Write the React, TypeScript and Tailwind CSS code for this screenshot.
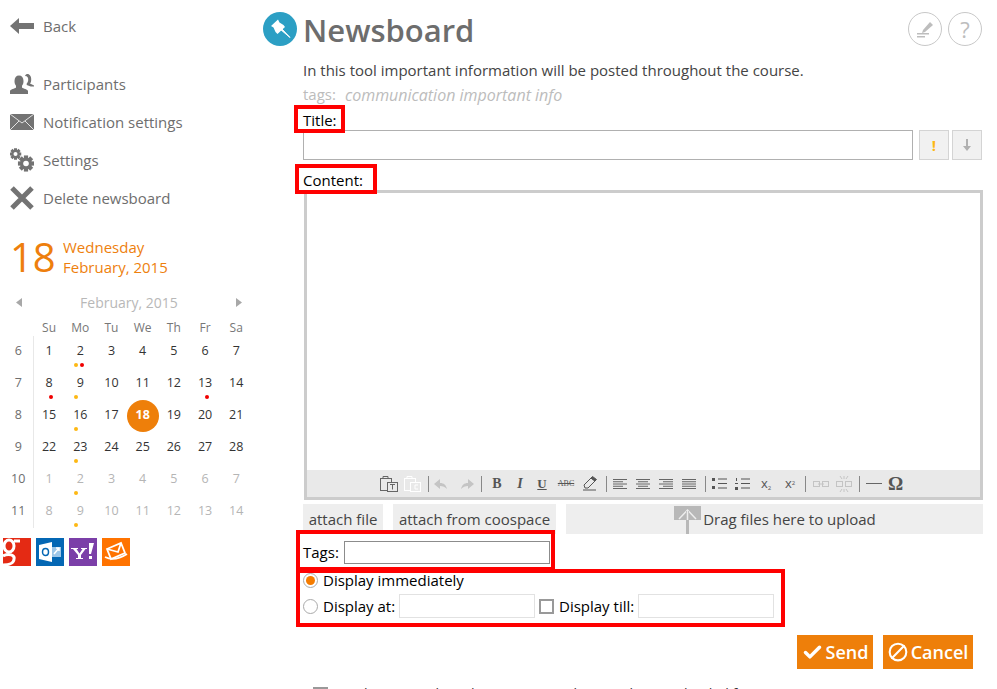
import React from "react";
import { Check, Ban } from "lucide-react";

const Y = "#fdb813";
const R = "#f00000";

function Back() {
  return <svg width="24" height="16" viewBox="0 0 24 16" fill="#737373"><path d="M0 8 9 0v5h15v6H9v5z" /></svg>;
}
function People() {
  return (
    <svg width="24" height="20" viewBox="0 0 24 20" fill="#737373">
      <path d="M15 2c2.500 0 3.500 2 3.200 4.300-.2 1.500-.9 2.500-1.500 3.300v1.500l4 1.500H24v-1l-4-2c1-1 1.200-2.200 1.200-4.600C21.200 1.500 19 0 17.500 0 16.500 0 15.600.5 15 2z" />
      <path d="M0 20v-3c0-1.500 5-2.500 6-3.500v-1.800C5 10.500 4.500 9 4.500 7c0-3.500 1.700-5.500 4.500-5.500s4.500 2 4.500 5.500c0 2-.5 3.500-1.500 4.700v1.800c1 1 6 2 6 3.500v3z" />
    </svg>
  );
}
function Mail() {
  return (
    <svg width="24" height="16" viewBox="0 0 24 16">
      <rect width="24" height="16" fill="#737373" />
      <path d="M0 0 12 9 24 0M0 16 9 7M24 16 15 7" stroke="#fff" strokeWidth="0.8" fill="none" />
    </svg>
  );
}
function Gear({ cx, cy, r }: { cx: number; cy: number; r: number }) {
  const teeth = [0, 45, 90, 135];
  return (
    <g>
      {teeth.map((a) => (
        <rect key={a} x={cx - r * 0.3} y={cy - r * 1.15} width={r * 0.6} height={r * 2.3} fill="#737373" transform={`rotate(${a} ${cx} ${cy})`} />
      ))}
      <circle cx={cx} cy={cy} r={r * 0.85} fill="#737373" />
      <circle cx={cx} cy={cy} r={r * 0.4} fill="#fff" />
    </g>
  );
}
function Gears() {
  return (
    <svg width="24" height="24" viewBox="0 0 24 24">
      <Gear cx={5.500} cy={6} r={5} />
      <Gear cx={16} cy={15.500} r={7} />
    </svg>
  );
}
function Cross() {
  return (
    <svg width="24" height="24" viewBox="0 0 24 24">
      <path d="M2 2 22 22M22 2 2 22" stroke="#737373" strokeWidth="5" />
    </svg>
  );
}

function MenuRow({ icon, label, mt }: { icon: React.ReactNode; label: string; mt?: string }) {
  return (
    <div className={`flex h-[38px] items-center ${mt ?? ""}`}>
      <div className="flex w-[33px] shrink-0 items-center">{icon}</div>
      <span className="text-[15px] text-[#6e6e6e]">{label}</span>
    </div>
  );
}

type Cell = { d: number; dim?: boolean; dots?: string[]; today?: boolean };
const weeks: { n: number; days: Cell[] }[] = [
  { n: 6, days: [{ d: 1 }, { d: 2, dots: [Y, R] }, { d: 3 }, { d: 4 }, { d: 5 }, { d: 6 }, { d: 7 }] },
  { n: 7, days: [{ d: 8, dots: ["transparent", R] }, { d: 9, dots: [Y, "transparent"] }, { d: 10 }, { d: 11 }, { d: 12 }, { d: 13, dots: ["transparent", R] }, { d: 14 }] },
  { n: 8, days: [{ d: 15 }, { d: 16, dots: [Y, "transparent"] }, { d: 17 }, { d: 18, today: true }, { d: 19 }, { d: 20 }, { d: 21 }] },
  { n: 9, days: [{ d: 22 }, { d: 23, dots: [Y, "transparent"] }, { d: 24 }, { d: 25 }, { d: 26 }, { d: 27 }, { d: 28 }] },
  { n: 10, days: [{ d: 1, dim: true }, { d: 2, dim: true, dots: [Y, "transparent"] }, { d: 3, dim: true }, { d: 4, dim: true }, { d: 5, dim: true }, { d: 6, dim: true }, { d: 7, dim: true }] },
  { n: 11, days: [{ d: 8, dim: true }, { d: 9, dim: true, dots: [Y, "transparent"] }, { d: 10, dim: true }, { d: 11, dim: true }, { d: 12, dim: true }, { d: 13, dim: true }, { d: 14, dim: true }] },
];

function Calendar() {
  return (
    <div className="w-[252px] pl-[3px]">
      <div className="flex h-[25px] items-center justify-between pl-[13px] pr-[10px] text-[14px] text-[#b8b8b8]">
        <svg width="6" height="9" viewBox="0 0 6 9" fill="#a8a8a8"><path d="M6 0v9L0 4.500z" /></svg>
        <span>February, 2015</span>
        <svg width="6" height="9" viewBox="0 0 6 9" fill="#a8a8a8"><path d="M0 0v9l6-4.500z" /></svg>
      </div>
      <div className="flex h-[21px] items-center pt-[4px] text-[12px] text-[#777]">
        <div className="w-[30.500px]" />
        {["Su", "Mo", "Tu", "We", "Th", "Fr", "Sa"].map((d) => (
          <div key={d} className="w-[31.200px] text-center">{d}</div>
        ))}
      </div>
      {weeks.map((w) => (
        <div key={w.n} className="flex h-[32px]">
          <div className="flex w-[30.500px] items-start justify-center border-r border-[#e8e8e8] pt-[6px] pl-[1px] text-[12.500px] leading-[18px] text-[#6e6e6e]">{w.n}</div>
          {w.days.map((c, i) => (
            <div key={i} className="relative w-[31.200px] pt-[6px] text-center text-[12.500px] leading-[18px]">
              {c.today && <div className="absolute left-[0px] top-[0px] h-[32px] w-[32px] rounded-full bg-[#ee7f0a]" />}
              <span className={`relative ${c.today ? "font-bold text-white" : c.dim ? "text-[#b5b5b5]" : "text-[#333]"}`}>{c.d}</span>
              {c.dots && (
                <div className="absolute left-[0px] top-[27px] flex w-full justify-center gap-[2px] pr-[3px]">
                  {c.dots.map((col, j) => (
                    <span key={j} className="h-[4px] w-[4px] rounded-full" style={{ backgroundColor: col }} />
                  ))}
                </div>
              )}
            </div>
          ))}
        </div>
      ))}
    </div>
  );
}

function Socials() {
  return (
    <div className="mt-[10px] flex gap-[5px] pl-[3px]">
      <div className="h-[28px] w-[28px] overflow-hidden bg-[#e42a14]">
        <svg width="28" height="28" viewBox="0 0 28 28" fill="none" stroke="#fff">
          <ellipse cx="6" cy="8" rx="5" ry="6" strokeWidth="3" />
          <path d="M11 3h6M0 18c6-3 12-1 11 3 0 4-5 6-11 6" strokeWidth="3" />
        </svg>
      </div>
      <div className="flex h-[28px] w-[28px] items-center justify-center bg-[#0467b4]">
        <svg width="22" height="20" viewBox="0 0 22 20">
          <rect x="9" y="5" width="13" height="10" fill="#9cc6e8" />
          <path d="M0 3 13 0v20L0 17z" fill="#fff" />
          <ellipse cx="6.500" cy="10" rx="3" ry="3.500" fill="none" stroke="#0467b4" strokeWidth="1.500" />
          <path d="M15 12l5-6M17 6h3v3" stroke="#fff" strokeWidth="1.500" fill="none" />
        </svg>
      </div>
      <div className="flex h-[28px] w-[28px] items-center justify-center bg-[#7b3fa8]">
        <svg width="24" height="20" viewBox="0 0 24 20" fill="#fff">
          <path d="M0 6h7v1H5.500l3 4.500L11.500 7H10V6h6v1h-1.500L10 13v3h2v1H5v-1h2v-3L2 7H0z" />
          <path d="M18 1h5l-3 11h-2zM18 14h3v3h-3z" />
        </svg>
      </div>
      <div className="flex h-[28px] w-[28px] items-center justify-center bg-[#ff7300]">
        <svg width="24" height="22" viewBox="0 0 24 22" fill="none" stroke="#fff" strokeWidth="1.800">
          <path d="M3 8 17 2l4 10L7 18zM3 8l11 3 3-9" />
          <path d="M1 16c6 3 14 2 22-3" />
        </svg>
      </div>
    </div>
  );
}

function Sep({ ml, mr }: { ml: string; mr: string }) {
  return <span className={`h-[16px] w-px shrink-0 bg-[#888] ${ml} ${mr}`} />;
}

function Lines({ kind, ml }: { kind: "l" | "c" | "r" | "j"; ml?: string }) {
  const rows = [0, 1, 2, 3, 4];
  return (
    <svg className={`shrink-0 ${ml ?? ""}`} width="14" height="12" viewBox="0 0 14 12" stroke="#666" strokeWidth="1">
      {rows.map((i) => {
        const long = i % 2 === 0 || kind === "j";
        const x1 = long ? 0 : kind === "l" ? 0 : kind === "c" ? 2 : 4;
        const x2 = long ? 14 : kind === "l" ? 10 : kind === "c" ? 12 : 14;
        return <line key={i} x1={x1} x2={x2} y1={1.500 + i * 2.250} y2={1.500 + i * 2.250} />;
      })}
    </svg>
  );
}

function Toolbar() {
  const tx = "shrink-0 text-[#555] leading-none font-['Liberation_Serif',serif]";
  return (
    <div className="flex h-[27px] items-center bg-[#e9e9e9] pl-[73px]">
      <svg className="shrink-0" width="18" height="16" viewBox="0 0 18 16" fill="none" stroke="#666"><rect x="0.500" y="2.500" width="11" height="12" /><rect x="7.500" y="6.500" width="10" height="9" fill="#e9e9e9" /><path d="M3 2.500V.5h5v2M10 8.500h5M12.500 8.500v5" /></svg>
      <svg className="ml-[6px] shrink-0" width="17" height="16" viewBox="0 0 17 16" fill="none" stroke="#fff"><rect x="0.500" y="2.500" width="11" height="12" /><rect x="6.500" y="6.500" width="10" height="9" fill="#e9e9e9" /><path d="M3 2.500V.5h5v2M14 9h-3v4h3" /></svg>
      <Sep ml="ml-[7px]" mr="mr-[5px]" />
      <svg className="shrink-0" width="14" height="12" viewBox="0 0 14 12" fill="#c4c4c4"><path d="M6 1 0 6l6 5V8c3 0 5 1 7 3-1-4-3-6-7-6z" /></svg>
      <svg className="ml-[12px] shrink-0" width="14" height="12" viewBox="0 0 14 12" fill="#c4c4c4"><path d="M8 1l6 5-6 5V8c-3 0-5 1-7 3 1-4 3-6 7-6z" /></svg>
      <Sep ml="ml-[7px]" mr="mr-[8px]" />
      <span className={`${tx} w-[14px] text-center text-[14px] font-bold`}>B</span>
      <span className={`${tx} ml-[10px] w-[12px] text-center text-[14px] font-bold italic`}>I</span>
      <span className={`${tx} ml-[10px] w-[12px] text-center text-[13px] font-bold underline`}>U</span>
      <span className={`${tx} ml-[9px] w-[18px] text-center text-[8px] line-through`}>ABC</span>
      <svg className="ml-[7px] shrink-0" width="16" height="15" viewBox="0 0 16 15" fill="none" stroke="#555"><path d="M2 9 9 2l4 3-7 7H3z" /><path d="M9 2l4 3 1.500-1.500-4-3z" fill="#555" /><path d="M1 14h13" /></svg>
      <Sep ml="ml-[8px]" mr="mr-[6px]" />
      <Lines kind="l" />
      <Lines kind="c" ml="ml-[9px]" />
      <Lines kind="r" ml="ml-[9px]" />
      <Lines kind="j" ml="ml-[9px]" />
      <Sep ml="ml-[9px]" mr="mr-[6px]" />
      <svg className="shrink-0" width="15" height="14" viewBox="0 0 15 14" fill="#555"><rect x="0" y="1" width="3" height="3" /><rect x="0" y="9" width="3" height="3" /><path d="M6 1.500h9v1H6zM6 6h9v1H6zM6 10.500h9v1H6z" /></svg>
      <svg className="ml-[8px] shrink-0" width="15" height="14" viewBox="0 0 15 14" fill="#555"><path d="M1 1h1v3H1zM0 6h3v1H0zM0 10h3v3H0zM6 1.500h9v1H6zM6 6h9v1H6zM6 10.500h9v1H6z" /></svg>
      <span className="ml-[9px] w-[14px] shrink-0 text-center text-[13px] leading-none text-[#555]">x<sub className="text-[6px]">2</sub></span>
      <span className="ml-[10px] w-[14px] shrink-0 text-center text-[13px] leading-none text-[#555]">x<sup className="text-[6px]">2</sup></span>
      <Sep ml="ml-[8px]" mr="mr-[7px]" />
      <svg className="shrink-0" width="16" height="8" viewBox="0 0 16 8" fill="none" stroke="#c4c4c4"><rect x="0.500" y="1.500" width="6" height="5" /><rect x="9.500" y="1.500" width="6" height="5" /><path d="M5 4h6" /></svg>
      <svg className="ml-[7px] shrink-0" width="16" height="16" viewBox="0 0 16 16" fill="none" stroke="#c4c4c4"><rect x="0.500" y="5.500" width="6" height="5" /><rect x="9.500" y="5.500" width="6" height="5" /><path d="M8 0v3M4 0l2 3M12 0l-2 3M8 13v3M4 16l2-3M12 16l-2-3" /></svg>
      <Sep ml="ml-[7px]" mr="mr-[6px]" />
      <span className="h-px w-[16px] shrink-0 bg-[#666]" />
      <span className={`${tx} ml-[6px] text-[19px] font-bold`}>Ω</span>
    </div>
  );
}

export default function App() {
  return (
    <div className="relative flex h-[689px] w-[997px] overflow-hidden bg-white font-['Open_Sans',sans-serif] text-[15px]">
      <aside className="w-[263px] shrink-0">
        <div className="pl-[10px] pt-[7px]">
          <MenuRow icon={<Back />} label="Back" />
          <MenuRow icon={<People />} label="Participants" mt="mt-[20px]" />
          <MenuRow icon={<Mail />} label="Notification settings" />
          <MenuRow icon={<Gears />} label="Settings" />
          <MenuRow icon={<Cross />} label="Delete newsboard" />
        </div>
        <div className="mt-[20px] flex h-[40px] items-center pl-[10px] text-[#ee7f0d]">
          <span className="w-[53px] text-[40px] leading-none">18</span>
          <div className="text-[15px] leading-[20px]">
            <div>Wednesday</div>
            <div>February, 2015</div>
          </div>
        </div>
        <div className="mt-[13px]">
          <Calendar />
        </div>
        <Socials />
      </aside>

      <main className="w-[720px] pl-[40px]">
        <div className="relative flex h-[60px] items-center">
          <div className="absolute left-[-40px] top-[12px] h-[34px] w-[34px] rounded-full bg-[#2c9fc4]">
            <svg width="34" height="34" viewBox="0 0 34 34" fill="#fff">
              <path d="M8 14 15 7.500 16.500 10.500 20.500 13 22 15 14.500 22 12.500 20 10.500 15.500z" />
              <path d="M17 17 27 25.500 18 16z" stroke="#fff" strokeWidth="1" />
            </svg>
          </div>
          <h1 className="text-[31px] font-semibold leading-none text-[#6d6d6d]">Newsboard</h1>
          <div className="absolute left-[605px] top-[12px] flex gap-[6px]">
            <div className="flex h-[34px] w-[34px] items-center justify-center rounded-full border border-[#c8c8c8]">
              <svg width="20" height="20" viewBox="0 0 20 20" fill="#bdbdbd">
                <path d="M8 11 15 3l3 3-8 7-3 1z" />
                <path d="M2 14h12v1.500H2zM2 17h8v1.500H2z" />
              </svg>
            </div>
            <div className="flex h-[34px] w-[34px] items-center justify-center rounded-full border border-[#c8c8c8] text-[22px] text-[#bdbdbd]">?</div>
          </div>
        </div>
        <p className="h-[22px] leading-[20px] text-[#444]">In this tool important information will be posted throughout the course.</p>
        <p className="flex h-[25px] items-center gap-[9px] text-[#bcbcbc]">
          <span>tags:</span>
          <span className="text-[16px] italic">communication important info</span>
        </p>
        <label className="block h-[23px] pt-[3px] leading-[20px] text-black">Title:</label>
        <div className="flex h-[30px] items-stretch">
          <input className="w-[610px] border border-[#b0b0b0]" />
          <button className="ml-[6px] flex w-[30px] items-center justify-center border border-[#d4d4d4] bg-[#f1f1f1] text-[15px] font-bold text-[#fdb813]">!</button>
          <button className="ml-[3px] flex w-[30px] items-center justify-center border border-[#d4d4d4] bg-[#f1f1f1]">
            <svg width="10" height="12" viewBox="0 0 10 12" fill="#b0b0b0"><path d="M4 0h2v7h3l-4 5-4-5h3z" /></svg>
          </button>
        </div>
        <label className="block h-[30px] pt-[10px] leading-[20px] text-black">Content:</label>
        <div className="ml-[1px] flex h-[310px] w-[679px] flex-col justify-end border-[3px] border-[#cccccc]">
          <Toolbar />
        </div>
        <div className="mt-[4px] flex h-[30px] w-[680px] text-[#444]">
          <button className="w-[80px] bg-[#eeeeee]">attach file</button>
          <button className="ml-[10px] w-[163px] bg-[#eeeeee]">attach from coospace</button>
          <div className="ml-[10px] flex w-[417px] items-center justify-center bg-[#eeeeee]">
            <svg className="shrink-0 self-end" width="30" height="28" viewBox="0 0 30 28">
              <rect x="1" y="0" width="27" height="14" fill="#b8b8b8" />
              <path d="M6 13 14.500 4 23 13" fill="none" stroke="#eee" strokeWidth="1.500" />
              <path d="M14.500 5v23" stroke="#b8b8b8" strokeWidth="3" />
              <path d="M14.500 5v9" stroke="#eee" strokeWidth="1.500" />
            </svg>
            <span>Drag files here to upload</span>
          </div>
        </div>
        <div className="mt-[7px] flex h-[23px] items-center text-black">
          <span className="w-[41px]">Tags:</span>
          <input className="h-[23px] w-[206px] border border-[#8c8c8c]" />
        </div>
        <div className="mt-[4px] flex h-[24px] items-center text-black">
          <span className="flex h-[15px] w-[15px] items-center justify-center rounded-full border border-[#aaa]">
            <span className="h-[9px] w-[9px] rounded-full bg-[#f57c00]" />
          </span>
          <span className="ml-[5px]">Display immediately</span>
        </div>
        <div className="mt-[2px] flex h-[24px] items-center text-black">
          <span className="h-[15px] w-[15px] rounded-full border border-[#aaa]" />
          <span className="ml-[5px] w-[76px]">Display at:</span>
          <input className="h-[24px] w-[136px] border border-[#e2e2e2]" />
          <span className="ml-[4px] h-[15px] w-[15px] border-2 border-[#999]" />
          <span className="ml-[5px] w-[79px]">Display till:</span>
          <input className="h-[24px] w-[136px] border border-[#e2e2e2]" />
        </div>
        <div className="mt-[17px] flex h-[34px] w-[670px] justify-end gap-[10px] text-[18px] font-semibold text-white">
          <button className="flex w-[76px] items-center justify-center gap-[3px] bg-[#ee7f0a]">
            <Check size={21} strokeWidth={4} />Send
          </button>
          <button className="flex w-[90px] items-center justify-center gap-[3px] bg-[#ee7f0a]">
            <Ban size={20} strokeWidth={2.500} className="-scale-x-100" />Cancel
          </button>
        </div>
        <div className="mt-[18px] flex h-[16px] items-start pl-[10px] text-[14px] leading-none text-[#333]">
          <span className="h-[14px] w-[15px] bg-[#999]" />
          <span className="ml-[7px]">Display in newsboard on coospace's home, when it is loaded for</span>
        </div>
      </main>

      <div className="pointer-events-none absolute left-[294px] top-[105px] h-[28px] w-[51px] border-4 border-[#ff0000]" />
      <div className="pointer-events-none absolute left-[295px] top-[164px] h-[30px] w-[82px] border-4 border-[#ff0000]" />
      <div className="pointer-events-none absolute left-[296px] top-[530px] h-[41px] w-[259px] border-4 border-[#ff0000]" />
      <div className="pointer-events-none absolute left-[296px] top-[569px] h-[58px] w-[489px] border-4 border-[#ff0000]" />
    </div>
  );
}
